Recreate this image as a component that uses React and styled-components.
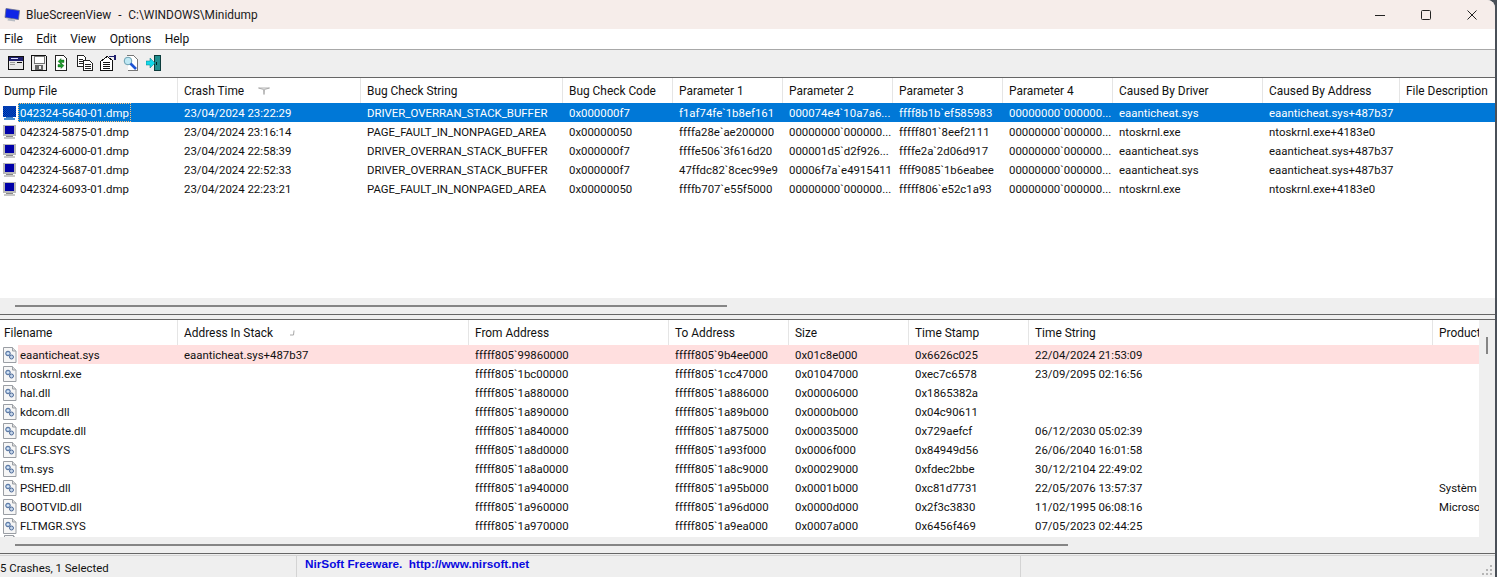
import React from 'react';
import styled, { createGlobalStyle } from 'styled-components';

const GlobalStyle = createGlobalStyle`
  html, body {
    margin: 0;
    padding: 0;
    height: 100%;
    overflow: hidden;
    background: #4a5058;
  }
  body {
    font-family: Roboto, "Noto Sans", sans-serif;
    font-size: 11.4px;
    color: #111;
  }
`;

const Window = styled.div`
  width: 1495px;
  height: 577px;
  display: flex;
  flex-direction: column;
  overflow: hidden;
  background: #efefef;
  border-top-right-radius: 8px;
`;

const TitleBar = styled.div`
  height: 29px;
  flex: none;
  display: flex;
  align-items: center;
  background: #f6edea;
  padding-left: 4px;
  font-size: 11.9px;
`;

const TitleText = styled.span`
  margin-left: 5px;
  white-space: pre;
  color: #1a1a1a;
  flex: 1;
  word-spacing: 0.5px;
`;

const WinButton = styled.div`
  width: 46px;
  height: 29px;
  display: flex;
  align-items: center;
  justify-content: center;
`;

const MenuBar = styled.div`
  height: 20px;
  flex: none;
  display: flex;
  align-items: center;
  background: #fff;
  border-bottom: 1px solid #a8a8a8;
  padding-left: 4px;
  gap: 13.5px;
  font-size: 12px;
`;

const ToolBar = styled.div`
  height: 28px;
  flex: none;
  display: flex;
  align-items: center;
  gap: 7px;
  padding: 0 0 1px 8px;
  box-sizing: border-box;
  background: #efefef;
  border-bottom: 1px solid #666;
`;

const Pane = styled.div`
  flex: none;
  height: ${p => p.$h}px;
  display: grid;
  grid-template-columns: 1fr ${p => (p.$vscroll ? '16px' : '0')};
  grid-template-rows: 1fr 16px;
  background: #efefef;
  border-bottom: 1px solid #666;
`;

const ListArea = styled.div`
  background: #fff;
  overflow: hidden;
  min-width: 0;
`;

const HeaderRow = styled.div`
  display: flex;
  height: 25px;
  align-items: center;
  white-space: nowrap;
  font-size: 11.9px;
`;

const HeaderCell = styled.div`
  flex: none;
  width: ${p => p.$w}px;
  box-sizing: border-box;
  height: 100%;
  display: flex;
  align-items: center;
  gap: 14px;
  padding-left: ${p => (p.$first ? 4 : 6)}px;
  border-right: 1px solid #e5e5e5;
  overflow: hidden;
  &:last-child {
    border-right: none;
  }
`;

const Row = styled.div`
  display: flex;
  height: 19px;
  align-items: center;
  white-space: nowrap;
`;

const IconSlot = styled.div`
  flex: none;
  width: 18px;
  height: 19px;
  padding-left: 3px;
  box-sizing: border-box;
  display: flex;
  align-items: center;
  background: #fff;
`;

const Cells = styled.div`
  flex: 1;
  display: flex;
  height: 100%;
  align-items: center;
  background: ${p => p.$bg || 'transparent'};
  color: ${p => (p.$selected ? '#fff' : 'inherit')};
`;

const Cell = styled.div`
  flex: none;
  width: ${p => p.$w}px;
  box-sizing: border-box;
  padding-left: ${p => (p.$first ? 2 : 6)}px;
  overflow: hidden;
`;

const FocusCell = styled.div`
  flex: none;
  width: ${p => p.$w}px;
  height: 19px;
  display: flex;
`;

const FocusLabel = styled.span`
  height: 19px;
  display: flex;
  align-items: center;
  padding: 0 2px;
  outline: 1px dotted #ffc27a;
  outline-offset: -1px;
`;

const PeekRow = styled.div`
  height: 3px;
  padding-left: 4px;
  overflow: hidden;
`;

const HTrack = styled.div`
  grid-column: 1 / -1;
  grid-row: 2;
  background: #efefef;
  padding: 7px 0 0 15px;
  box-sizing: border-box;
`;

const HThumb = styled.div`
  width: ${p => p.$w}px;
  height: 2px;
  background: #858585;
`;

const VTrack = styled.div`
  background: #efefef;
  padding: 17px 0 0 7px;
  box-sizing: border-box;
`;

const VThumb = styled.div`
  width: 2px;
  height: 17px;
  background: #858585;
`;

const Splitter = styled.div`
  flex: none;
  height: 4px;
  background: #efefef;
  border-bottom: 1px solid #666;
`;

const StatusBar = styled.div`
  flex: 1;
  display: flex;
  background: #efefef;
  margin-top: 1px;
  border-top: 1px solid #d4d4d4;
  position: relative;
`;

const StatusPanel = styled.div`
  flex: none;
  width: ${p => p.$w}px;
  box-sizing: border-box;
  padding: ${p => p.$top}px 0 0 ${p => p.$pad || 0}px;
  border-right: 1px solid #d4d4d4;
  overflow: hidden;
  white-space: nowrap;
`;

const NirLink = styled.span`
  color: #0a0ae0;
  font-family: "Liberation Sans", Arial, sans-serif;
  font-weight: 700;
  font-size: 11.75px;
  white-space: pre;
`;

const Grip = styled.svg`
  position: absolute;
  right: 1px;
  bottom: 0;
`;

const AppIcon = () => (
  <svg width="17" height="16" viewBox="0 0 17 16">
    <path d="M2 1.500L15.500 3.500L14.500 12.500L1 10.500z" fill="#0f24e6" stroke="#6a6f88" strokeWidth=".8" />
    <path d="M4 11.500L11 12.500L11 14.500L3.500 13.500z" fill="#b8bcc4" />
  </svg>
);

const MonitorIcon = ({ selected }) => (
  <svg width="16" height="16" viewBox="0 0 16 16" shapeRendering="crispEdges">
    <defs>
      <pattern id="dither" width="2" height="2" patternUnits="userSpaceOnUse">
        <rect width="2" height="2" fill="#0078d7" />
        <rect width="1" height="1" fill="#00008c" />
        <rect x="1" y="1" width="1" height="1" fill="#00008c" />
      </pattern>
    </defs>
    <rect x="0" y="0" width="14" height="12" fill={selected ? 'url(#dither)' : '#b8b8b8'} />
    {!selected && <rect x="2" y="2" width="10" height="8" fill="#0000a8" />}
    <rect x="3" y="12" width="8" height="1" fill={selected ? '#3a80c8' : '#8a8a8a'} />
    <rect x="1" y="13" width="12" height="2" fill={selected ? '#4a90d0' : '#c8c8c8'} />
  </svg>
);

const DriverIcon = () => (
  <svg width="14" height="16" viewBox="0 0 14 16">
    <path d="M.5 .5h9l3.500 3.500v11.500h-12.500z" fill="#f6f6f6" stroke="#9a9ea4" />
    <path d="M9.500 .5v3.500h3.500" fill="#dcdcdc" stroke="#9a9ea4" />
    <circle cx="5" cy="6.500" r="2.300" fill="#a9c4e4" stroke="#3f5f90" strokeWidth=".9" />
    <circle cx="8.500" cy="10" r="2" fill="#c6d6ea" stroke="#3f5f90" strokeWidth=".9" />
    <circle cx="5" cy="6.500" r=".7" fill="#fff" />
  </svg>
);

const SortArrow = ({ small }) => (
  <svg width="12" height="8" viewBox="0 0 12 8">
    {small ? (
      <path d="M7 1.500L6.500 6M6.500 6H3" stroke="#a8a8a8" fill="none" />
    ) : (
      <path d="M.5 1h11L6.500 2.500L6 7.500L5.500 2.500z" stroke="#a0a0a0" fill="#f8f8f8" strokeWidth=".8" />
    )}
  </svg>
);

const ToolIcon = ({ children }) => (
  <svg width="16" height="16" viewBox="0 0 16 16" shapeRendering="crispEdges">
    {children}
  </svg>
);

const ToolIcons = () => (
  <>
    <ToolIcon>
      <rect x=".5" y="1.500" width="15" height="13" fill="#e8e8e8" stroke="#111" />
      <rect x="1" y="2" width="14" height="4" fill="#20206e" />
      <rect x="3" y="3" width="7" height="1" fill="#dfe3ff" />
      <rect x="2" y="7" width="5" height="1" fill="#999" />
      <rect x="9" y="7" width="5" height="1" fill="#111" />
      <rect x="2" y="9" width="5" height="1" fill="#999" />
    </ToolIcon>
    <ToolIcon>
      <path d="M.5 .5h14l1 1v14h-15z" fill="#ededed" stroke="#111" />
      <rect x="3" y="1" width="10" height="7" fill="#fff" stroke="#222" strokeWidth=".6" />
      <rect x="4" y="10" width="8" height="5" fill="#666" />
      <rect x="8" y="11" width="2" height="3" fill="#eee" />
    </ToolIcon>
    <ToolIcon>
      <path d="M1.500 .5h8l3 3v12h-11z" fill="#fff" stroke="#222" />
      <path d="M4 6.500L7 3.500V5h3v2.500H7V9z" fill="#1a9a28" stroke="#0c5c14" strokeWidth=".4" shapeRendering="auto" />
      <path d="M10 10.500L7 13.500V12H4V9.500h3V8z" fill="#1a9a28" stroke="#0c5c14" strokeWidth=".4" shapeRendering="auto" />
    </ToolIcon>
    <ToolIcon>
      <path d="M.5 .5h6l2 2v9h-8z" fill="#fff" stroke="#222" />
      <rect x="2" y="4" width="4" height="1" fill="#222" />
      <rect x="2" y="6" width="4" height="1" fill="#222" />
      <rect x="2" y="8" width="4" height="1" fill="#222" />
      <path d="M6.500 5.500h6l3 3v6.500h-9z" fill="#fff" stroke="#222" />
      <rect x="8" y="9" width="6" height="1" fill="#222" />
      <rect x="8" y="11" width="6" height="1" fill="#222" />
      <rect x="8" y="13" width="6" height="1" fill="#222" />
    </ToolIcon>
    <ToolIcon>
      <path d="M.5 6.500L7 1.500l5 3.500v10.500h-11.500z" fill="#fff" stroke="#111" />
      <rect x="3" y="7" width="7" height="1" fill="#111" />
      <rect x="3" y="9" width="7" height="1" fill="#111" />
      <rect x="3" y="11" width="7" height="1" fill="#111" />
      <rect x="3" y="13" width="7" height="1" fill="#111" />
      <rect x="9" y="1" width="5" height="1" fill="#20206e" />
      <rect x="14" y="0" width="2" height="5" fill="#20206e" />
    </ToolIcon>
    <ToolIcon>
      <path d="M3.500 .5h7l3.500 3.500v11h-9" fill="#fff" stroke="#777" />
      <circle cx="5" cy="6" r="3.800" fill="#bfe8f4" stroke="#6a9fb0" shapeRendering="auto" />
      <path d="M7.500 8.500L13 14" stroke="#1b53d4" strokeWidth="2.600" shapeRendering="auto" />
    </ToolIcon>
    <ToolIcon>
      <rect x="8.500" y=".5" width="6" height="15" fill="#1f8f8f" stroke="#0c3c3c" />
      <rect x="10" y="7" width="1" height="3" fill="#022" />
      <path d="M0 6h4V3l5 5-5 5v-3H0z" fill="#12d8e8" stroke="#0a7a80" strokeWidth=".5" shapeRendering="auto" />
    </ToolIcon>
  </>
);

const topCols = [178, 183, 202, 110, 110, 110, 110, 110, 150, 137, 95];
const topHeads = ['Dump File', 'Crash Time', 'Bug Check String', 'Bug Check Code', 'Parameter 1', 'Parameter 2', 'Parameter 3', 'Parameter 4', 'Caused By Driver', 'Caused By Address', 'File Description'];
const topRows = [
  ['042324-5640-01.dmp', '23/04/2024 23:22:29', 'DRIVER_OVERRAN_STACK_BUFFER', '0x000000f7', 'f1af74fe`1b8ef161', '000074e4`10a7a6...', 'ffff8b1b`ef585983', '00000000`000000...', 'eaanticheat.sys', 'eaanticheat.sys+487b37'],
  ['042324-5875-01.dmp', '23/04/2024 23:16:14', 'PAGE_FAULT_IN_NONPAGED_AREA', '0x00000050', 'ffffa28e`ae200000', '00000000`000000...', 'fffff801`8eef2111', '00000000`000000...', 'ntoskrnl.exe', 'ntoskrnl.exe+4183e0'],
  ['042324-6000-01.dmp', '23/04/2024 22:58:39', 'DRIVER_OVERRAN_STACK_BUFFER', '0x000000f7', 'ffffe506`3f616d20', '000001d5`d2f926...', 'ffffe2a`2d06d917', '00000000`000000...', 'eaanticheat.sys', 'eaanticheat.sys+487b37'],
  ['042324-5687-01.dmp', '23/04/2024 22:52:33', 'DRIVER_OVERRAN_STACK_BUFFER', '0x000000f7', '47ffdc82`8cec99e9', '00006f7a`e4915411', 'ffff9085`1b6eabee', '00000000`000000...', 'eaanticheat.sys', 'eaanticheat.sys+487b37'],
  ['042324-6093-01.dmp', '23/04/2024 22:23:21', 'PAGE_FAULT_IN_NONPAGED_AREA', '0x00000050', 'ffffb707`e55f5000', '00000000`000000...', 'fffff806`e52c1a93', '00000000`000000...', 'ntoskrnl.exe', 'ntoskrnl.exe+4183e0'],
];

const bottomCols = [178, 291, 200, 120, 120, 120, 404, 46];
const bottomHeads = ['Filename', 'Address In Stack', 'From Address', 'To Address', 'Size', 'Time Stamp', 'Time String', 'Product Name'];
const bottomRows = [
  ['eaanticheat.sys', 'eaanticheat.sys+487b37', 'fffff805`99860000', 'fffff805`9b4ee000', '0x01c8e000', '0x6626c025', '22/04/2024 21:53:09', ''],
  ['ntoskrnl.exe', '', 'fffff805`1bc00000', 'fffff805`1cc47000', '0x01047000', '0xec7c6578', '23/09/2095 02:16:56', ''],
  ['hal.dll', '', 'fffff805`1a880000', 'fffff805`1a886000', '0x00006000', '0x1865382a', '', ''],
  ['kdcom.dll', '', 'fffff805`1a890000', 'fffff805`1a89b000', '0x0000b000', '0x04c90611', '', ''],
  ['mcupdate.dll', '', 'fffff805`1a840000', 'fffff805`1a875000', '0x00035000', '0x729aefcf', '06/12/2030 05:02:39', ''],
  ['CLFS.SYS', '', 'fffff805`1a8d0000', 'fffff805`1a93f000', '0x0006f000', '0x84949d56', '26/06/2040 16:01:58', ''],
  ['tm.sys', '', 'fffff805`1a8a0000', 'fffff805`1a8c9000', '0x00029000', '0xfdec2bbe', '30/12/2104 22:49:02', ''],
  ['PSHED.dll', '', 'fffff805`1a940000', 'fffff805`1a95b000', '0x0001b000', '0xc81d7731', '22/05/2076 13:57:37', 'Systèm'],
  ['BOOTVID.dll', '', 'fffff805`1a960000', 'fffff805`1a96d000', '0x0000d000', '0x2f3c3830', '11/02/1995 06:08:16', 'Microsoft'],
  ['FLTMGR.SYS', '', 'fffff805`1a970000', 'fffff805`1a9ea000', '0x0007a000', '0x6456f469', '07/05/2023 02:44:25', ''],
];

export default function App() {
  return (
    <>
      <GlobalStyle />
      <Window>
        <TitleBar>
          <AppIcon />
          <TitleText>{'BlueScreenView  -  C:\\WINDOWS\\Minidump'}</TitleText>
          <WinButton>
            <svg width="10" height="10" viewBox="0 0 10 10"><path d="M0 5.500h10" stroke="#222" /></svg>
          </WinButton>
          <WinButton>
            <svg width="10" height="10" viewBox="0 0 10 10"><rect x=".5" y=".5" width="9" height="9" rx="1" fill="none" stroke="#222" /></svg>
          </WinButton>
          <WinButton>
            <svg width="10" height="10" viewBox="0 0 10 10"><path d="M.5 .5l9 9M9.500 .5l-9 9" stroke="#222" /></svg>
          </WinButton>
        </TitleBar>
        <MenuBar>
          <span>File</span>
          <span>Edit</span>
          <span>View</span>
          <span>Options</span>
          <span>Help</span>
        </MenuBar>
        <ToolBar>
          <ToolIcons />
        </ToolBar>
        <Pane $h={236}>
          <ListArea>
            <HeaderRow>
              {topHeads.map((h, i) => (
                <HeaderCell key={h} $w={topCols[i]} $first={i === 0}>
                  {h}
                  {i === 1 && <SortArrow />}
                </HeaderCell>
              ))}
            </HeaderRow>
            {topRows.map((r, ri) => (
              <Row key={r[0]}>
                <IconSlot>
                  <MonitorIcon selected={ri === 0} />
                </IconSlot>
                <Cells $bg={ri === 0 ? '#0078d7' : undefined} $selected={ri === 0}>
                  {r.map((c, i) => {
                    const w = i === 0 ? topCols[0] - 18 : topCols[i];
                    if (i === 0 && ri === 0) {
                      return (
                        <FocusCell key={i} $w={w}>
                          <FocusLabel>{c}</FocusLabel>
                        </FocusCell>
                      );
                    }
                    return (
                      <Cell key={i} $first={i === 0} $w={w}>
                        {c}
                      </Cell>
                    );
                  })}
                </Cells>
              </Row>
            ))}
          </ListArea>
          <HTrack>
            <HThumb $w={712} />
          </HTrack>
        </Pane>
        <Splitter />
        <Pane $h={233} $vscroll>
          <ListArea>
            <HeaderRow>
              {bottomHeads.map((h, i) => (
                <HeaderCell key={h} $w={bottomCols[i]} $first={i === 0}>
                  {h}
                  {i === 1 && <SortArrow small />}
                </HeaderCell>
              ))}
            </HeaderRow>
            {bottomRows.map((r, ri) => (
              <Row key={r[0]}>
                <IconSlot>
                  <DriverIcon />
                </IconSlot>
                <Cells $bg={ri === 0 ? '#ffdfdf' : undefined}>
                  {r.map((c, i) => (
                    <Cell key={i} $first={i === 0} $w={i === 0 ? bottomCols[0] - 18 : bottomCols[i]}>
                      {c}
                    </Cell>
                  ))}
                </Cells>
              </Row>
            ))}
            <PeekRow>
              <DriverIcon />
            </PeekRow>
          </ListArea>
          <VTrack>
            <VThumb />
          </VTrack>
          <HTrack>
            <HThumb $w={1053} />
          </HTrack>
        </Pane>
        <StatusBar>
          <StatusPanel $w={297} $top={5}>5 Crashes, 1 Selected</StatusPanel>
          <StatusPanel $w={724} $top={1} $pad={8}>
            <NirLink>{'NirSoft Freeware.  http://www.nirsoft.net'}</NirLink>
          </StatusPanel>
          <Grip width="12" height="12" viewBox="0 0 12 12">
            <g fill="#b5b5b5">
              <rect x="8" y="0" width="2" height="2" />
              <rect x="4" y="4" width="2" height="2" />
              <rect x="8" y="4" width="2" height="2" />
              <rect x="0" y="8" width="2" height="2" />
              <rect x="4" y="8" width="2" height="2" />
              <rect x="8" y="8" width="2" height="2" />
            </g>
          </Grip>
        </StatusBar>
      </Window>
    </>
  );
}
